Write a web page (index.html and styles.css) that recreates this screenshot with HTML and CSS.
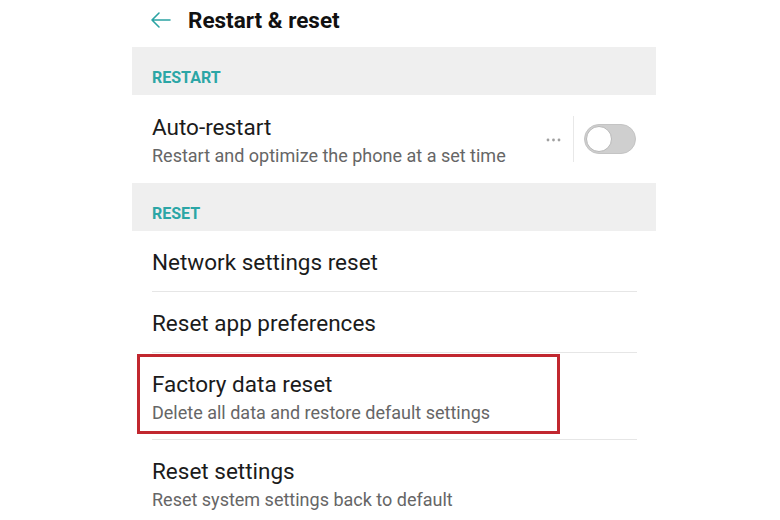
FILE: index.html
```html
<!DOCTYPE html>
<html>
<head>
<meta charset="utf-8">
<link rel="stylesheet" href="styles.css">
</head>
<body>
<div class="page">
  <div class="screen">
    <header class="header">
      <svg class="back" width="22" height="18" viewBox="0 0 22 18"><path d="M20 9H2M9 2L2 9l7 7" fill="none" stroke="#2ba3a3" stroke-width="1.6" stroke-linecap="round" stroke-linejoin="round"/></svg>
      <h1 class="title">Restart &amp; reset</h1>
    </header>

    <div class="section">RESTART</div>
    <div class="row row-two row-switch">
      <div class="texts">
        <div class="primary">Auto-restart</div>
        <div class="secondary">Restart and optimize the phone at a set time</div>
      </div>
      <div class="controls">
        <svg class="dots" width="15" height="4" viewBox="0 0 15 4"><circle cx="2" cy="2" r="1.4" fill="#a0a0a0"/><circle cx="7.5" cy="2" r="1.4" fill="#a0a0a0"/><circle cx="13" cy="2" r="1.4" fill="#a0a0a0"/></svg>
        <span class="vsep"></span>
        <span class="toggle"><span class="knob"></span></span>
      </div>
    </div>

    <div class="section">RESET</div>
    <div class="row row-one divided">
      <div class="primary">Network settings reset</div>
    </div>
    <div class="row row-one divided">
      <div class="primary">Reset app preferences</div>
    </div>
    <div class="row row-two divided">
      <div class="texts">
        <div class="primary">Factory data reset</div>
        <div class="secondary">Delete all data and restore default settings</div>
      </div>
      <div class="highlight"></div>
    </div>
    <div class="row row-two">
      <div class="texts">
        <div class="primary">Reset settings</div>
        <div class="secondary">Reset system settings back to default</div>
      </div>
    </div>
  </div>
</div>
</body>
</html>
```
FILE: styles.css
```css
* { box-sizing: border-box; }
html, body { margin: 0; padding: 0; background: #fff; }
body { font-family: Roboto, "Noto Sans", sans-serif; color: #1b1b1b; overflow: hidden; height: 520px; }
.page { padding-left: 132px; }
.screen { width: 524px; }

.header { height: 47px; display: flex; align-items: center; padding-left: 18px; padding-bottom: 8px; }
.back { margin-right: 16px; }
.title { margin: 0; font-size: 22.5px; line-height: 28px; font-weight: 700; color: #111; }

.section { height: 48px; background: #efefef; padding: 21px 0 0 20px; font-size: 16px; line-height: 19px; font-weight: 700; color: #2ba6a6; }

.row { position: relative; display: flex; align-items: center; padding-left: 20px; padding-right: 20px; }
.row-one { height: 61px; }
.row-two { height: 87px; }
.row-switch { height: 88px; }
.divided::after { content: ""; position: absolute; left: 20px; right: 19px; bottom: 0; height: 1px; background: #e6e6e6; }

.texts { flex: 1; display: flex; flex-direction: column; }
.row-two .texts { align-self: flex-start; padding-top: 18px; }
.row-switch .texts { padding-top: 19px; }
.primary { font-size: 22.5px; line-height: 26px; color: #1b1b1b; }
.row-one .primary { margin-top: 1px; }
.secondary { font-size: 18px; line-height: 22px; color: #666; margin-top: 5px; }

.controls { display: flex; align-items: center; }
.dots { margin-right: 12px; margin-top: 1px; }
.vsep { width: 1px; height: 46px; background: #e8e8e8; margin-right: 10px; }
.toggle { position: relative; width: 52px; height: 30px; border-radius: 15px; background: #cfcfcf; border: 1px solid #c4c4c4; }
.knob { position: absolute; left: 1px; top: 1px; width: 26px; height: 26px; border-radius: 50%; background: #fff; border: 1px solid #b8b8b8; }

.highlight { position: absolute; left: 5px; top: 1px; width: 423px; height: 80px; border: 3px solid #c1272f; }
```
